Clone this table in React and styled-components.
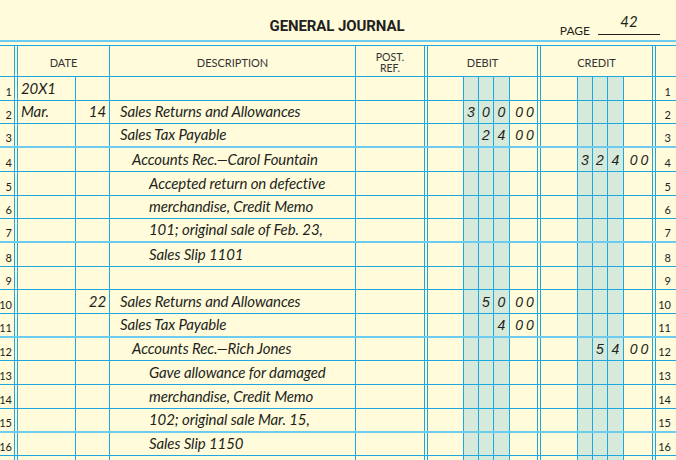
import React from 'react';
import styled, { createGlobalStyle } from 'styled-components';

const BLUE = '#1ca7e1';
const LIGHT_BLUE = '#6ccbef';
const CREAM = '#fffbdb';
const SHADE = '#d6eadc';
const INK = '#231f20';

// column widths, left to right (double rules are the 3px columns)
const COLS =
	'14px 3px 58px 34px 246px 69px 3px 36px 15px 15px 16px 28px 3px 37px 15px 15px 16px 29px 3px 21px';

const GlobalStyle = createGlobalStyle`
	html, body {
		margin: 0;
		padding: 0;
		background: ${CREAM};
		overflow: hidden;
	}
	#root {
		font-family: Lato, "Liberation Sans", sans-serif;
		color: ${INK};
	}
`;

const Page = styled.div`
	width: 676px;
	height: 460px;
	overflow: hidden;
	background: ${CREAM};
`;

const TitleBar = styled.div`
	height: 40px;
	display: grid;
	grid-template-columns: 1fr auto 1fr;
	align-items: start;
	padding-top: 17px;
	box-sizing: border-box;
`;

const Title = styled.h1`
	grid-column: 2;
	margin: 0 2px 0 0;
	font-family: Roboto, "Liberation Sans", sans-serif;
	font-weight: 700;
	font-size: 15px;
	line-height: 18px;
	letter-spacing: -0.1px;
`;

const PageInfo = styled.div`
	grid-column: 3;
	justify-self: end;
	display: flex;
	align-items: flex-end;
	gap: 8px;
	padding-right: 16px;
	margin-top: -3px;
`;

const PageLabel = styled.span`
	font-size: 12px;
	line-height: 12px;
	margin-bottom: -2px;
`;

const PageBlank = styled.span`
	width: 62px;
	border-bottom: 1px solid ${INK};
	text-align: center;
	font-style: italic;
	font-size: 15px;
	line-height: 15px;
	padding-bottom: 5px;
`;

const TopRule = styled.div`
	height: 2px;
	background: ${LIGHT_BLUE};
	margin-bottom: 3px;
`;

const Row = styled.div`
	display: grid;
	grid-template-columns: ${COLS};
	height: ${p => p.$h}px;
	box-sizing: border-box;
	border-bottom: ${p => (p.$thick ? `2px solid ${LIGHT_BLUE}` : `1px solid ${BLUE}`)};
`;

const HeaderRow = styled(Row)`
	border-top: 1px solid ${BLUE};
	height: 32px;
`;

const Cell = styled.div`
	border-left: 1px solid ${BLUE};
	background: ${p => (p.$shade ? SHADE : 'transparent')};
	display: flex;
	align-items: flex-end;
	justify-content: ${p => p.$justify || 'flex-start'};
	padding-left: ${p => p.$pl || 0}px;
	padding-right: ${p => p.$pr || 0}px;
	padding-bottom: 3px;
	box-sizing: border-box;
	min-width: 0;
	white-space: nowrap;
	&:first-child {
		border-left: none;
	}
`;

const HeadCell = styled.div`
	grid-column: span ${p => p.$span || 1};
	border-left: ${p => (p.$first ? 'none' : `1px solid ${BLUE}`)};
	display: flex;
	align-items: center;
	justify-content: center;
	text-align: center;
	font-size: 11px;
	line-height: 11px;
	color: #333;
	padding-top: 2px;
	box-sizing: border-box;
`;

const StackedLabel = styled.span`
	display: flex;
	flex-direction: column;
	align-items: center;
	font-size: 10.5px;
	line-height: 10px;
	gap: 1px;
`;

const LineNo = styled(Cell)`
	font-size: 11px;
	line-height: 11px;
	padding-bottom: 3px;
	overflow: visible;
`;

const Entry = styled.span`
	font-style: italic;
	font-size: 15px;
	line-height: 17px;
	letter-spacing: -0.1px;
`;

const Digit = styled.span`
	font-family: "Liberation Sans", Arial, sans-serif;
	font-style: italic;
	font-size: 14px;
	line-height: 16px;
`;

const rows = [
	{ month: '20X1' },
	{ month: 'Mar.', day: '14', desc: 'Sales Returns and Allowances', debit: '300', dc: '00' },
	{ desc: 'Sales Tax Payable', debit: '24', dc: '00' },
	{ desc: 'Accounts Rec.\u2014Carol Fountain', lvl: 1, credit: '324', cc: '00' },
	{ desc: 'Accepted return on defective', lvl: 2 },
	{ desc: 'merchandise, Credit Memo', lvl: 2 },
	{ desc: '101; original sale of Feb. 23,', lvl: 2 },
	{ desc: 'Sales Slip 1101', lvl: 2 },
	{},
	{ day: '22', desc: 'Sales Returns and Allowances', debit: '50', dc: '00' },
	{ desc: 'Sales Tax Payable', debit: '4', dc: '00' },
	{ desc: 'Accounts Rec.\u2014Rich Jones', lvl: 1, credit: '54', cc: '00' },
	{ desc: 'Gave allowance for damaged', lvl: 2 },
	{ desc: 'merchandise, Credit Memo', lvl: 2 },
	{ desc: '102; original sale Mar. 15,', lvl: 2 },
	{ desc: 'Sales Slip 1150', lvl: 2 },
	{ blank: true },
];

const INDENT = [10, 22, 39];

// split an amount into 3 digit slots, right aligned
function slots(amount) {
	const s = (amount || '').padStart(3, ' ');
	return s.split('').map(c => (c === ' ' ? '' : c));
}

function rowTop(i) {
	return Math.round(77 + 23.7 * i);
}

function Money({ amount, cents, keyBase }) {
	return (
		<>
			<Cell />
			{slots(amount).map((d, i) => (
				<Cell key={keyBase + i} $shade $justify='center'>
					<Digit>{d}</Digit>
				</Cell>
			))}
			<Cell $justify='center' $pl={2}>
				<Digit>{cents ? cents.split('').join('\u2009') : ''}</Digit>
			</Cell>
		</>
	);
}

export default function App() {
	return (
		<Page>
			<GlobalStyle />
			<TitleBar>
				<Title>GENERAL JOURNAL</Title>
				<PageInfo>
					<PageLabel>PAGE</PageLabel>
					<PageBlank>42</PageBlank>
				</PageInfo>
			</TitleBar>
			<TopRule />

			<HeaderRow $h={32}>
				<HeadCell $first />
				<HeadCell />
				<HeadCell $span={2}>DATE</HeadCell>
				<HeadCell>DESCRIPTION</HeadCell>
				<HeadCell>
					<StackedLabel>
						<span>POST.</span>
						<span>REF.</span>
					</StackedLabel>
				</HeadCell>
				<HeadCell />
				<HeadCell $span={5}>DEBIT</HeadCell>
				<HeadCell />
				<HeadCell $span={5}>CREDIT</HeadCell>
				<HeadCell />
				<HeadCell />
			</HeaderRow>

			{rows.map((r, i) => {
				const n = i + 1;
				const num = r.blank ? '' : n;
				return (
					<Row key={n} $h={rowTop(i + 1) - rowTop(i)} $thick={n % 4 === 3}>
						<LineNo $justify='flex-end' $pr={2}>
							{num}
						</LineNo>
						<Cell />
						<Cell $pl={3}>
							<Entry>{r.month}</Entry>
						</Cell>
						<Cell $justify='flex-end' $pr={3}>
							<Entry>{r.day}</Entry>
						</Cell>
						<Cell $pl={INDENT[r.lvl || 0]}>
							<Entry>{r.desc}</Entry>
						</Cell>
						<Cell />
						<Cell />
						<Money amount={r.debit} cents={r.dc} keyBase='d' />
						<Cell />
						<Money amount={r.credit} cents={r.cc} keyBase='c' />
						<Cell />
						<LineNo $justify='flex-end' $pr={5}>
							{num}
						</LineNo>
					</Row>
				);
			})}
		</Page>
	);
}
